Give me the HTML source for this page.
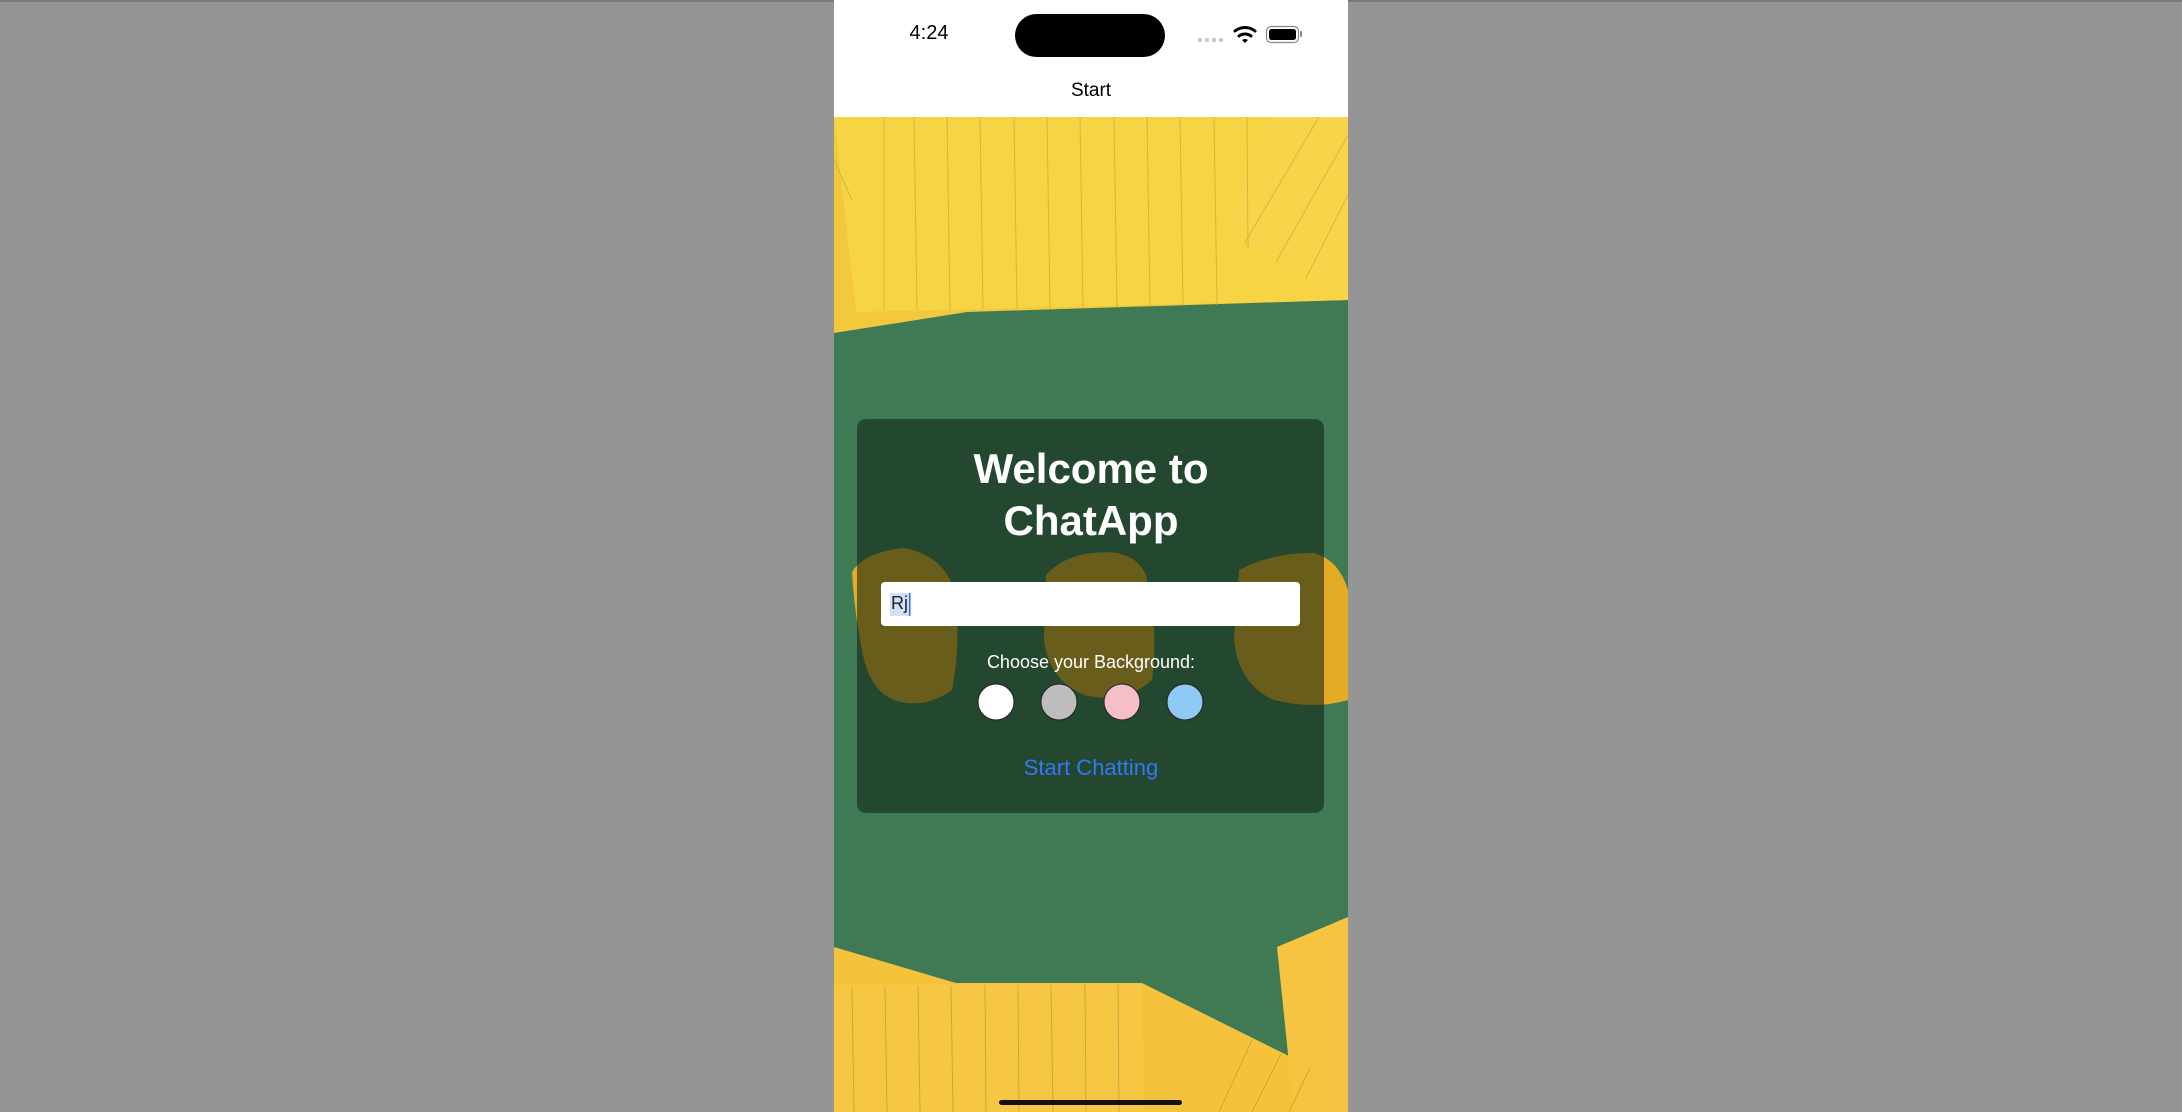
<!DOCTYPE html>
<html><head><meta charset="utf-8"><style>
html,body{margin:0;padding:0;width:2182px;height:1112px;overflow:hidden;background:#959595;font-family:"Liberation Sans",sans-serif;}
#top{position:absolute;left:0;top:0;width:2182px;height:2px;background:#7a7a7a}
#phone{position:absolute;left:834px;top:0;width:514px;height:1112px;overflow:hidden;background:#3f7a54}
svg{position:absolute;left:0;top:0}
.t{position:absolute;left:0;width:514px;text-align:center}
</style></head><body>
<div id="top"></div>
<div id="phone">
<svg width="514" height="1112" viewBox="0 0 514 1112">
  <rect x="0" y="117" width="514" height="995" fill="#3f7a54"/>
  <polygon points="0,117 514,117 514,300 133,312 0,333" fill="#f3c83c"/>
  <polygon points="0,117 514,117 514,300 22,312" fill="#f6d444"/>
  <polygon points="390,230 440,117 514,117 514,300" fill="#f7d44a"/>
  <g stroke="#c9b03a" stroke-width="1" opacity="0.8">
    <line x1="50" y1="117" x2="50" y2="310"/><line x1="80" y1="117" x2="83" y2="310"/><line x1="113" y1="117" x2="116" y2="310"/>
    <line x1="146" y1="117" x2="149" y2="309"/><line x1="180" y1="117" x2="183" y2="309"/><line x1="213" y1="117" x2="216" y2="308"/>
    <line x1="246" y1="117" x2="249" y2="308"/><line x1="280" y1="117" x2="283" y2="307"/><line x1="313" y1="117" x2="316" y2="306"/>
    <line x1="346" y1="117" x2="349" y2="305"/><line x1="380" y1="117" x2="383" y2="305"/><line x1="413" y1="117" x2="414" y2="248"/>
    <line x1="485" y1="117" x2="410" y2="244"/><line x1="514" y1="135" x2="442" y2="262"/><line x1="514" y1="195" x2="472" y2="278"/>
    <line x1="0" y1="160" x2="18" y2="200"/>
  </g>
  <g fill="#e4ac24">
    <path d="M18 572 Q30 552 70 548 Q110 556 120 590 Q128 640 118 690 Q90 710 60 700 Q35 690 28 650 Q20 610 18 572 Z"/>
    <path d="M212 575 Q230 555 260 553 Q300 548 312 575 Q325 630 318 680 Q290 705 250 695 Q215 680 210 640 Z"/>
    <path d="M405 570 Q440 552 480 553 Q505 560 514 590 L514 700 Q480 710 440 700 Q405 685 400 640 Z"/>
  </g>
  <polygon points="0,947 122,983 308,983 493,1075 514,1112 0,1112" fill="#f5c23c"/>
  <polygon points="0,985 308,983 310,1112 0,1112" fill="#f7c744"/>
  <polygon points="443,947 514,917 514,1112 460,1112" fill="#f6c440"/>
  <g stroke="#bba23a" stroke-width="1" opacity="0.8">
    <line x1="18" y1="987" x2="20" y2="1112"/><line x1="51" y1="986" x2="53" y2="1112"/><line x1="84" y1="986" x2="86" y2="1112"/>
    <line x1="117" y1="986" x2="119" y2="1112"/><line x1="151" y1="985" x2="152" y2="1112"/><line x1="184" y1="985" x2="185" y2="1112"/>
    <line x1="217" y1="985" x2="219" y2="1112"/><line x1="251" y1="984" x2="252" y2="1112"/><line x1="284" y1="984" x2="285" y2="1112"/>
    <line x1="418" y1="1040" x2="385" y2="1112"/><line x1="447" y1="1054" x2="418" y2="1112"/><line x1="476" y1="1068" x2="455" y2="1112"/>
  </g>
  <rect x="23" y="419" width="467" height="394" rx="9" fill="#0f2414" fill-opacity="0.58"/>
  <rect x="0" y="0" width="514" height="117" fill="#fff"/>
  <rect x="181" y="14" width="150" height="43" rx="21.5" fill="#000"/>
  <g fill="#c8c8c8"><rect x="364" y="38" width="4" height="4" rx="1"/><rect x="371" y="38" width="4" height="4" rx="1"/><rect x="378" y="38" width="4" height="4" rx="1"/><rect x="385" y="38" width="4" height="4" rx="1"/></g>
  <g fill="none" stroke="#000" stroke-width="3" stroke-linecap="round">
    <path d="M401 31 A16 16 0 0 1 421 31"/><path d="M405 36 A10 10 0 0 1 417 36"/>
  </g>
  <path d="M408 40 L411 43 L414 40 A5 5 0 0 0 408 40Z" fill="#000"/>
  <rect x="432.5" y="26.5" width="32" height="16" rx="4.5" fill="none" stroke="#888" stroke-width="1.2"/>
  <rect x="435" y="29" width="27" height="11" rx="2.5" fill="#000"/>
  <rect x="466" y="31" width="2" height="6" rx="1" fill="#888"/>
  <rect x="47" y="582" width="419" height="44" rx="4" fill="#fff"/>
  <rect x="56" y="593" width="20" height="23" fill="#cfe0f8"/>
  <rect x="75" y="593" width="1.5" height="23" fill="#2a6ef0"/>
  <circle cx="162" cy="702" r="18" fill="#fff" stroke="#222" stroke-width="1"/>
  <circle cx="225" cy="702" r="18" fill="#bdbdbd" stroke="#222" stroke-width="1"/>
  <circle cx="288" cy="702" r="18" fill="#f5bfca" stroke="#222" stroke-width="1"/>
  <circle cx="351" cy="702" r="18" fill="#8fcaf4" stroke="#222" stroke-width="1"/>
  <rect x="165" y="1100" width="183" height="5" rx="2.5" fill="#111"/>
</svg>
<div class="t" style="top:22px;left:60px;width:70px;font-size:20px;color:#000">4:24</div>
<div class="t" style="top:80px;font-size:19px;color:#000">Start</div>
<div class="t" style="top:443px;font-size:42px;font-weight:bold;color:#fff;line-height:52px">Welcome to<br>ChatApp</div>
<div style="position:absolute;left:57px;top:593px;font-size:18px;color:#222">Rj</div>
<div class="t" style="top:652px;font-size:18px;color:#fff">Choose your Background:</div>
<div class="t" style="top:755px;font-size:22px;color:#3478f6">Start Chatting</div>
</div>
</body></html>
